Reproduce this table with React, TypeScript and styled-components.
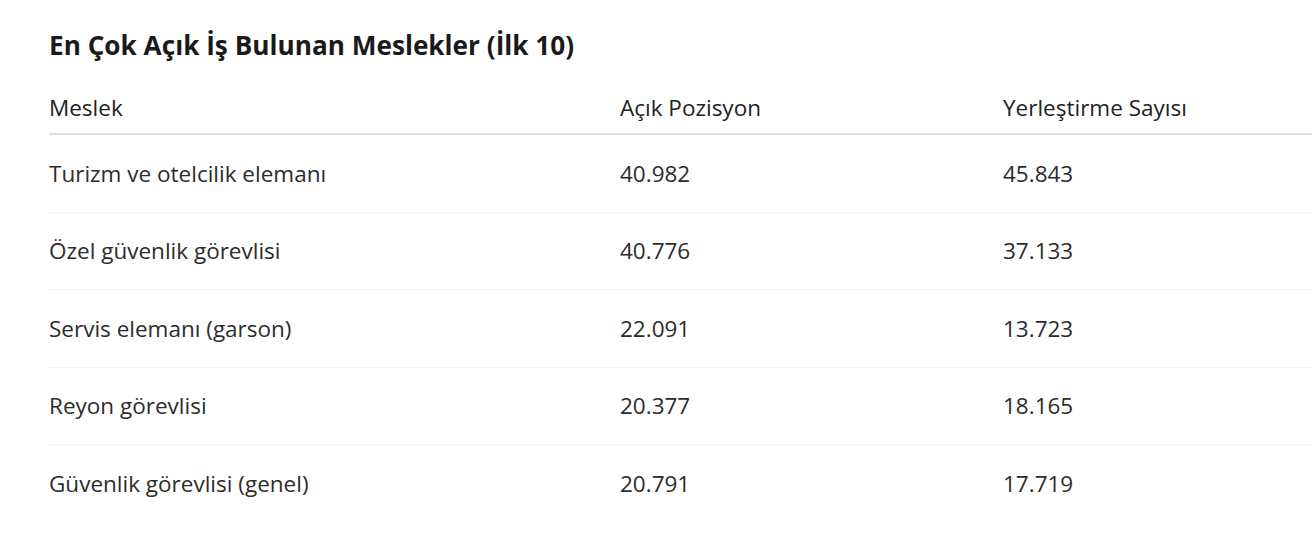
import styled, { createGlobalStyle } from "styled-components";

const GlobalStyle = createGlobalStyle`
  html, body {
    margin: 0;
    padding: 0;
    background: #ffffff;
    overflow: hidden;
  }
  body {
    font-family: "Open Sans", "Noto Sans", sans-serif;
    color: #222;
  }
`;

interface Meslek {
  ad: string;
  acik: string;
  yerlestirme: string;
}

const meslekler: Meslek[] = [
  { ad: "Turizm ve otelcilik elemanı", acik: "40.982", yerlestirme: "45.843" },
  { ad: "Özel güvenlik görevlisi", acik: "40.776", yerlestirme: "37.133" },
  { ad: "Servis elemanı (garson)", acik: "22.091", yerlestirme: "13.723" },
  { ad: "Reyon görevlisi", acik: "20.377", yerlestirme: "18.165" },
  { ad: "Güvenlik görevlisi (genel)", acik: "20.791", yerlestirme: "17.719" },
];

const Sayfa = styled.div`
  padding: 28px 0 0 49px;
`;

const Baslik = styled.h2`
  margin: 0 0 29px 0;
  font-size: 26.2px;
  font-weight: 700;
  color: #1a1a1a;
  line-height: 34px;
`;

const Tablo = styled.table`
  width: 100%;
  border-collapse: collapse;
  table-layout: fixed;
`;

const BaslikHucre = styled.th<{ $genislik?: number }>`
  width: ${(p) => (p.$genislik ? `${p.$genislik}px` : "auto")};
  text-align: left;
  font-weight: 400;
  font-size: 22.5px;
  color: #222;
  padding: 0 0 10px 0;
  height: 32px;
  border-bottom: 2px solid #dedede;
  white-space: nowrap;
`;

const Satir = styled.tr<{ $son: boolean }>`
  border-bottom: ${(p) => (p.$son ? "none" : "1.5px solid #f1f1f1")};
`;

const Hucre = styled.td`
  font-size: 22.5px;
  color: #2c2c2c;
  height: 76.5px;
  padding: 0;
  vertical-align: middle;
  white-space: nowrap;
`;

const App = () => {
  return (
    <>
      <GlobalStyle />
      <Sayfa>
        <Baslik>En Çok Açık İş Bulunan Meslekler (İlk 10)</Baslik>
        <Tablo>
          <thead>
            <tr>
              <BaslikHucre $genislik={571}>Meslek</BaslikHucre>
              <BaslikHucre $genislik={383}>Açık Pozisyon</BaslikHucre>
              <BaslikHucre>Yerleştirme Sayısı</BaslikHucre>
            </tr>
          </thead>
          <tbody>
            {meslekler.map((m, i) => (
              <Satir key={m.ad} $son={i === meslekler.length - 1}>
                <Hucre>{m.ad}</Hucre>
                <Hucre>{m.acik}</Hucre>
                <Hucre>{m.yerlestirme}</Hucre>
              </Satir>
            ))}
          </tbody>
        </Tablo>
      </Sayfa>
    </>
  );
};

export default App;
